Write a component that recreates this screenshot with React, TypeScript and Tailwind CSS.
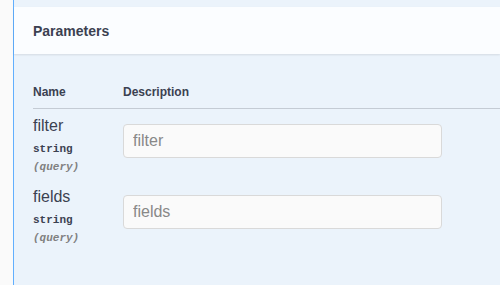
import React from "react";

const rows = [
  { name: "filter" },
  { name: "fields" },
];

export default function App() {
  return (
    <div
      className="w-[500px] h-[285px] flex bg-[#fafafa] overflow-hidden text-[#3b4151]"
      style={{ fontFamily: '"Liberation Sans", Arial, sans-serif' }}
    >
      <div className="w-[13px] shrink-0" />
      <div className="flex-1 border-l border-[#61affe] bg-[#ebf3fb] pt-[7px] flex flex-col">
        <div className="h-[47px] bg-[#fbfdff] shadow-[0_1px_2px_rgba(0,0,0,0.1)] flex items-center pl-[19px]">
          <h4 className="text-[14px] font-bold leading-none">Parameters</h4>
        </div>
        <div className="pl-[19px] pt-[31px]">
          <div className="flex text-[12px] font-bold leading-[14px] pb-[9px] border-b border-[#c4cbd4]">
            <div className="w-[90px]">Name</div>
            <div>Description</div>
          </div>
          {rows.map((r) => (
            <div key={r.name} className="flex h-[71px] pt-[8px]">
              <div className="w-[90px] flex flex-col">
                <div className="text-[16px] leading-[18px]">{r.name}</div>
                <div
                  className="text-[11px] font-bold leading-[14px] mt-[7px]"
                  style={{ fontFamily: '"Liberation Mono", "DejaVu Sans Mono", monospace' }}
                >
                  string
                </div>
                <div
                  className="text-[11px] italic font-bold leading-[14px] mt-[4px] text-[#808080]"
                  style={{ fontFamily: '"Liberation Mono", "DejaVu Sans Mono", monospace' }}
                >
                  (query)
                </div>
              </div>
              <div className="pt-[7px]">
                <input
                  placeholder={r.name}
                  className="w-[319px] h-[34px] rounded-[4px] border border-[#d9d9d9] bg-[#fafafa] px-[9px] text-[16px] placeholder:text-[#888888] outline-none"
                  style={{ fontFamily: '"Liberation Sans", Arial, sans-serif' }}
                />
              </div>
            </div>
          ))}
        </div>
      </div>
    </div>
  );
}
